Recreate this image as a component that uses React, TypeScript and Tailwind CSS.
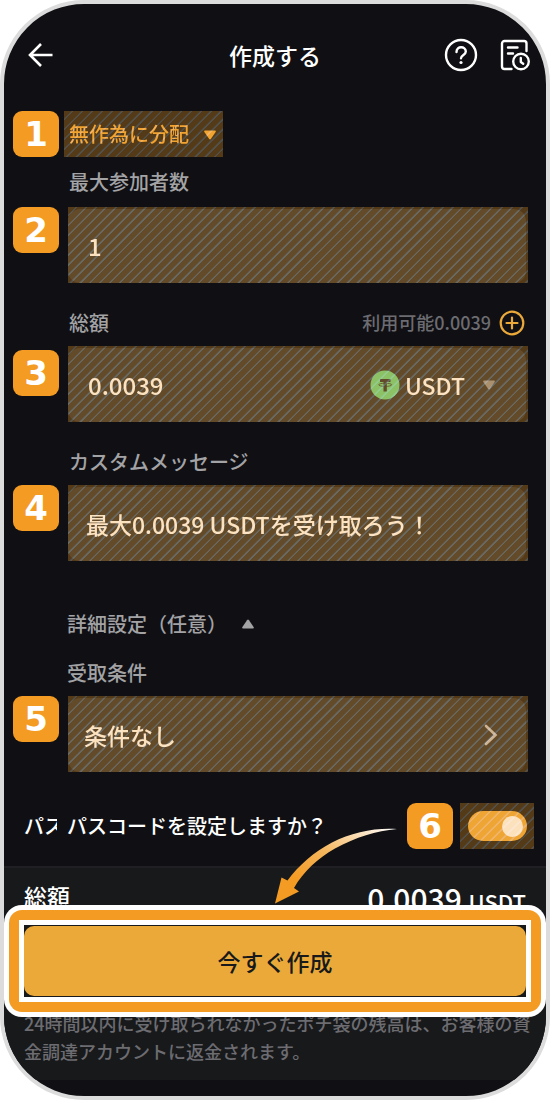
import { useState } from "react";
import type { ReactNode } from "react";
import clsx from "clsx";

interface StepBadgeProps {
  step: number;
}

function StepBadge({ step }: StepBadgeProps) {
  return (
    <span className="flex h-[46px] w-[46px] shrink-0 items-center justify-center rounded-[9px] bg-[#f49b23] font-['DejaVu_Sans',sans-serif] text-[34px] leading-none font-bold text-white">
      {step}
    </span>
  );
}

interface HatchedProps {
  className?: string;
  children: ReactNode;
}

/* 斜線のハイライト */
function Hatched({ className, children }: HatchedProps) {
  return (
    <div className={clsx("relative isolate", className)}>
      {children}
      <div className="pointer-events-none absolute inset-0 bg-[#f49a23]/30" />
      <div className="pointer-events-none absolute inset-0 bg-[repeating-linear-gradient(135deg,transparent_0px,transparent_5px,#0a2b45_6px,#0a2b45_7px)] mix-blend-screen" />
    </div>
  );
}

interface FieldRowProps {
  step: number;
  badgeClassName?: string;
  children: ReactNode;
}

function FieldRow({ step, badgeClassName, children }: FieldRowProps) {
  return (
    <div className="flex items-start gap-[9px] pr-[18px] pl-[9px]">
      <div className={badgeClassName}>
        <StepBadge step={step} />
      </div>
      <Hatched className="h-[76px] min-w-0 flex-1 pt-0.5 pr-0.5">
        <div className="flex h-full items-center rounded-xl bg-[#25282b]">{children}</div>
      </Hatched>
    </div>
  );
}

function HistoryIcon() {
  return (
    <svg viewBox="0 0 30 32" className="h-8 w-[30px]" fill="none" stroke="currentColor" strokeWidth="2.4" strokeLinecap="round" strokeLinejoin="round">
      <path d="M11.5 30H4.5A2.5 2.5 0 0 1 2 27.5v-23A2.5 2.5 0 0 1 4.5 2H24a2.5 2.5 0 0 1 2.5 2.5V12" />
      <path d="M8 8.5h9.500M8 14.500h5" />
      <circle cx="21" cy="22.500" r="7.800" />
      <path d="M20.800 19v4l2.400 1.700" />
    </svg>
  );
}

function TetherIcon() {
  return (
    <svg viewBox="0 0 30 30" className="h-[30px] w-[30px] shrink-0">
      <circle cx="15" cy="15" r="14.500" fill="#60d281" />
      <path d="M10 9h10.500v3h-3.700v9.500h-3.300V12H10z" fill="#25282b" />
      <ellipse cx="15.200" cy="14.800" rx="6.500" ry="1.600" fill="none" stroke="#25282b" strokeWidth=".8" />
    </svg>
  );
}

function Caret({ className }: { className?: string }) {
  return (
    <svg viewBox="0 0 14 10" className={clsx("h-[10px] w-[14px]", className)} fill="currentColor">
      <path d="M2 .5h10q1.300.2.600 1.400L8 8.800q-1 1.300-2 0L1.400 1.900Q.700.700 2 .5z" />
    </svg>
  );
}

export default function App() {
  const [count, setCount] = useState("1");
  const [amount, setAmount] = useState("0.0039");
  const [message, setMessage] = useState("最大0.0039 USDTを受け取ろう！");
  const [passcode, setPasscode] = useState(true);

  return (
    <main className="bg-white font-['Noto_Sans_CJK_JP',sans-serif] font-medium">
      <div className="overflow-hidden rounded-[84px] border-4 border-[#dcdcdc] bg-[#101014] pb-4">
        {/* ヘッダー */}
        <header className="grid h-[102px] grid-cols-[1fr_auto_1fr] items-center px-4 text-white">
          <button aria-label="戻る" className="justify-self-start pl-2">
            <svg viewBox="0 0 26 26" className="h-[26px] w-[26px]" fill="none" stroke="currentColor" strokeWidth="2.600">
              <path d="M24.500 13H2.500M13 2 2 13l11 11" />
            </svg>
          </button>
          <h1 className="text-[23px] leading-none">作成する</h1>
          <div className="flex items-center gap-[22px] justify-self-end">
            <button aria-label="ヘルプ">
              <svg viewBox="0 0 34 34" className="h-[34px] w-[34px]" fill="none" stroke="currentColor" strokeWidth="2.400" strokeLinecap="round">
                <circle cx="17" cy="17" r="15" />
                <path d="M12.500 14c0-6.500 9.300-6 9.300-.5 0 3.500-4.800 3.300-4.800 6.800" />
                <circle cx="17" cy="24.500" r="1.600" fill="currentColor" stroke="none" />
              </svg>
            </button>
            <button aria-label="履歴">
              <HistoryIcon />
            </button>
          </div>
        </header>

        {/* 分配方法 */}
        <div className="mt-[5px] flex gap-[5px] pl-[9px]">
          <StepBadge step={1} />
          <Hatched className="h-[46px] w-[159px]">
            <select aria-label="分配方法" className="h-full w-full appearance-none pl-[5px] text-[20px] text-[#efa735]">
              <option>無作為に分配</option>
            </select>
            <Caret className="pointer-events-none absolute top-[19px] right-[6px] text-[#efa735]" />
          </Hatched>
        </div>

        {/* 最大参加者数 */}
        <label htmlFor="count" className="flex h-[50px] items-center pl-[65px] text-[20px] text-[#a3a3a6]">
          最大参加者数
        </label>
        <FieldRow step={2}>
          <input
            id="count"
            value={count}
            onChange={(e) => setCount(e.target.value)}
            className="w-full min-w-0 bg-transparent px-5 text-[24px] text-white outline-none"
          />
        </FieldRow>

        {/* 総額 */}
        <div className="flex h-[63px] items-center justify-between pt-4 pr-[21px] pl-[65px]">
          <label htmlFor="amount" className="text-[20px] text-[#a3a3a6]">
            総額
          </label>
          <div className="flex items-center gap-2 text-[18px] text-[#6c6c71]">
            <span>利用可能0.0039</span>
            <button aria-label="追加" className="text-[#eba93a]">
              <svg viewBox="0 0 26 26" className="h-[26px] w-[26px]" fill="none" stroke="currentColor" strokeWidth="2.200" strokeLinecap="round">
                <circle cx="13" cy="13" r="11.300" />
                <path d="M13 7.500v11M7.500 13h11" />
              </svg>
            </button>
          </div>
        </div>
        <FieldRow step={3} badgeClassName="pt-1">
          <input
            id="amount"
            value={amount}
            onChange={(e) => setAmount(e.target.value)}
            className="min-w-0 flex-1 bg-transparent pl-5 text-[24px] text-white outline-none"
          />
          <div className="relative flex w-[156px] items-center gap-[5px]">
            <TetherIcon />
            <select aria-label="通貨" className="w-full appearance-none text-[23px] text-white">
              <option>USDT</option>
            </select>
            <Caret className="pointer-events-none absolute right-[30px] text-[#8c8c8f]" />
          </div>
        </FieldRow>

        {/* カスタムメッセージ */}
        <label htmlFor="message" className="flex h-[63px] items-center pt-4 pl-[65px] text-[20px] text-[#a3a3a6]">
          カスタムメッセージ
        </label>
        <FieldRow step={4}>
          <input
            id="message"
            value={message}
            onChange={(e) => setMessage(e.target.value)}
            className="w-full min-w-0 bg-transparent px-[18px] text-[23px] text-white outline-none"
          />
        </FieldRow>

        {/* 詳細設定 */}
        <button className="mt-[37px] flex h-[52px] items-center gap-[14px] pl-[63px] text-[20px] text-[#a3a3a6]">
          詳細設定（任意）
          <Caret className="rotate-180" />
        </button>
        <h2 className="flex h-[46px] items-center pl-[63px] text-[20px] text-[#a3a3a6]">受取条件</h2>
        <FieldRow step={5}>
          <button className="flex w-full items-center justify-between pr-7 pl-4 text-[23px] text-white">
            条件なし
            <svg viewBox="0 0 14 22" className="h-[22px] w-[14px] text-[#bdbdc0]" fill="none" stroke="currentColor" strokeWidth="2.600" strokeLinecap="round">
              <path d="m2 2 9.500 9L2 20" />
            </svg>
          </button>
        </FieldRow>

        {/* パスコード */}
        <div className="mt-[31px] flex h-[46px] items-center pr-3 pl-5 text-[20px] text-white">
          <span aria-hidden="true" className="w-[33px] overflow-hidden whitespace-nowrap">
            パス
          </span>
          <label htmlFor="passcode" className="ml-[10px] flex-1 whitespace-nowrap">
            パスコードを設定しますか？
          </label>
          <StepBadge step={6} />
          <Hatched className="ml-[7px] flex h-[46px] w-[74px] items-center justify-center">
            <input
              id="passcode"
              type="checkbox"
              role="switch"
              checked={passcode}
              onChange={(e) => setPasscode(e.target.checked)}
              className="flex h-[30px] w-[59px] appearance-none items-center rounded-full bg-[#8c8c8f] px-1 before:h-[21px] before:w-[21px] before:rounded-full before:bg-white checked:justify-end checked:bg-[#eba93a]"
            />
          </Hatched>
        </div>

        {/* フッター */}
        <footer className="relative mt-[17px] border-t-2 border-[#202024] bg-[#18191b] pb-[15px]">
          <svg viewBox="0 0 126 82" className="pointer-events-none absolute -top-[42px] right-[148px] z-20 h-[82px] w-[126px]">
            <defs>
              <linearGradient id="arrow" x1="1" y1="0" x2="0" y2="1">
                <stop offset="0" stopColor="#fff" />
                <stop offset=".45" stopColor="#f5b65c" />
                <stop offset=".75" stopColor="#f49b23" />
              </linearGradient>
            </defs>
            <path
              d="M125 3C104 1.500 80 6 60 16.500 42 26 27 39 15.500 54.500L9.500 51.500 3 77.500 27 65.500 22 62C31 46 46 32 63 22.500 84 11 104 5 125 3z"
              fill="url(#arrow)"
            />
          </svg>
          <div className="flex h-[37px] justify-between overflow-hidden px-5 text-white">
            <span className="text-[23px] leading-[56px]">総額</span>
            <span className="text-[30px] leading-[60px]">
              0.0039 <span className="text-[22px]">USDT</span>
            </span>
          </div>
          <div className="relative z-10 rounded-[18px] bg-white p-[5px]">
            <div className="rounded-[13px] bg-[#f49b23] p-[10px]">
              <div className="bg-white p-[5px]">
                <div className="bg-[#18191b] pt-px pb-px">
                  <button className="block h-[70px] w-full rounded-[10px] bg-[#eba93a] text-[23px] text-[#18191b]">
                    今すぐ作成
                  </button>
                </div>
              </div>
            </div>
          </div>
          <p className="-mt-2 pr-3 pl-5 text-[18px] leading-7 text-[#6c6c71]">
            24時間以内に受け取られなかったポチ袋の残高は、お客様の資
            <br />
            金調達アカウントに返金されます。
          </p>
        </footer>
      </div>
    </main>
  );
}
